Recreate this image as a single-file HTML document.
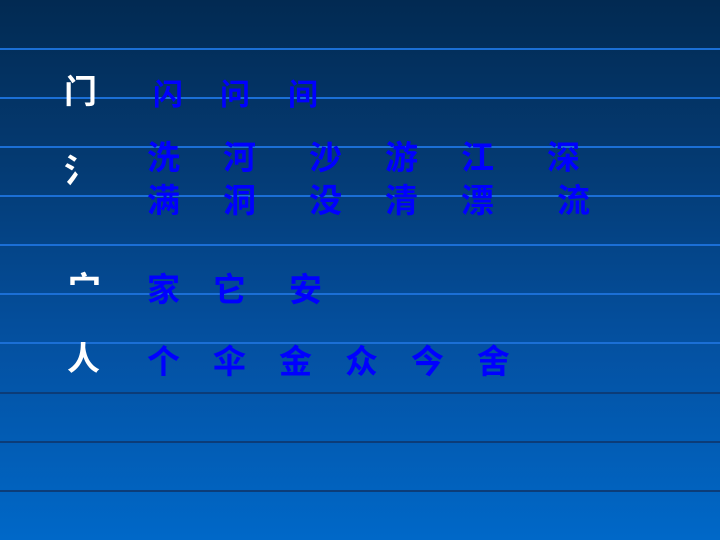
<!DOCTYPE html>
<html><head><meta charset="utf-8"><style>
html,body{margin:0;padding:0}
body{width:720px;height:540px;position:relative;overflow:hidden;
background:linear-gradient(to bottom,#022a52 0%,#043a72 30%,#0450a0 63%,#0068c8 100%);
font-family:"Liberation Sans","Noto Sans CJK SC",sans-serif;}
.l{position:absolute;left:0;width:720px;height:2px}
.u{background:#1b6fd6}
.d{background:#0c3c78}
.c{position:absolute;font-size:33px;line-height:33px;font-weight:bold;color:#0000ff;white-space:nowrap}
.w{color:#fff}
</style></head><body>
<div class="l u" style="top:48px"></div>
<div class="l u" style="top:97px"></div>
<div class="l u" style="top:146px"></div>
<div class="l u" style="top:195px"></div>
<div class="l u" style="top:244px"></div>
<div class="l u" style="top:293px"></div>
<div class="l u" style="top:342px"></div>
<div class="l d" style="top:392px"></div>
<div class="l d" style="top:441px"></div>
<div class="l d" style="top:490px"></div>

<span class="c w" style="left:64px;top:75px">门</span>
<span class="c" style="left:153px;top:79px;font-size:30px">闪</span>
<span class="c" style="left:220px;top:79px;font-size:30px">问</span>
<span class="c" style="left:288px;top:79px;font-size:30px">间</span>

<span class="c w" style="left:64px;top:154px">氵</span>
<span class="c" style="left:147px;top:141px">洗</span>
<span class="c" style="left:223px;top:141px">河</span>
<span class="c" style="left:309px;top:141px">沙</span>
<span class="c" style="left:385px;top:141px">游</span>
<span class="c" style="left:461px;top:141px">江</span>
<span class="c" style="left:547px;top:141px">深</span>
<span class="c" style="left:147px;top:184px">满</span>
<span class="c" style="left:223px;top:184px">洞</span>
<span class="c" style="left:309px;top:184px">没</span>
<span class="c" style="left:385px;top:184px">清</span>
<span class="c" style="left:461px;top:184px">漂</span>
<span class="c" style="left:557px;top:184px">流</span>

<span class="c w" style="left:68px;top:272px">宀</span>
<span class="c" style="left:147px;top:273px">家</span>
<span class="c" style="left:213px;top:273px">它</span>
<span class="c" style="left:289px;top:273px">安</span>

<span class="c w" style="left:67px;top:342px">人</span>
<span class="c" style="left:147px;top:345px">个</span>
<span class="c" style="left:213px;top:345px">伞</span>
<span class="c" style="left:279px;top:345px">金</span>
<span class="c" style="left:345px;top:345px">众</span>
<span class="c" style="left:411px;top:345px">今</span>
<span class="c" style="left:477px;top:345px">舍</span>
</body></html>
